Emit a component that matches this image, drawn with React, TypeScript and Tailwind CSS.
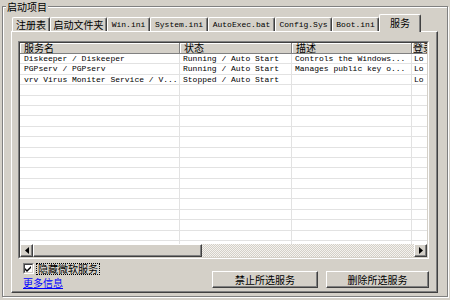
import React from 'react';

const cjk = "[font-family:'Noto_Sans_CJK_SC',sans-serif]";
const mono = "[font-family:'Liberation_Mono','Noto_Sans_CJK_SC',monospace]";

const raised =
  'border border-t-white border-l-white border-r-[#404040] border-b-[#404040] shadow-[inset_-1px_-1px_0_#808080] bg-[#d4d0c8]';

const tabs = [
  { label: '注册表', w: 'w-[38px]', ascii: false },
  { label: '启动文件夹', w: 'w-[57px]', ascii: false },
  { label: 'Win.ini', w: 'w-[43px]', ascii: true },
  { label: 'System.ini', w: 'w-[58px]', ascii: true },
  { label: 'AutoExec.bat', w: 'w-[67px]', ascii: true },
  { label: 'Config.Sys', w: 'w-[57px]', ascii: true },
  { label: 'Boot.ini', w: 'w-[47px]', ascii: true },
];

// last column is only partly visible, as in the list view
const columns = [
  { title: '服务名', w: 'w-[160px]', clip: '' },
  { title: '状态', w: 'w-[112px]', clip: '' },
  { title: '描述', w: 'w-[120px]', clip: '' },
  { title: '登录', w: 'w-[15px]', clip: 'overflow-hidden' },
];

const services = [
  ['Diskeeper / Diskeeper', 'Running / Auto Start', 'Controls the Windows...', 'Lo'],
  ['PGPserv / PGPserv', 'Running / Auto Start', 'Manages public key o...', 'Lo'],
  ['vrv Virus Moniter Service / V...', 'Stopped / Auto Start', '', 'Lo'],
];

const rows = [...services, ...Array.from({ length: 16 }, () => ['', '', '', ''])];

const Arrow: React.FC<{ dir: 'left' | 'right' }> = ({ dir }) => (
  <svg width="4" height="7" viewBox="0 0 4 7">
    {dir === 'left' ? <path d="M4 0 L0 3.5 L4 7 Z" fill="#000" /> : <path d="M0 0 L4 3.5 L0 7 Z" fill="#000" />}
  </svg>
);

const ScrollButton: React.FC<{ dir: 'left' | 'right' }> = ({ dir }) => (
  <div className={`w-[13px] h-full shrink-0 flex items-center justify-center ${raised}`}>
    <Arrow dir={dir} />
  </div>
);

const ServiceTable: React.FC = () => (
  <div className="ml-[6px] mt-[9px] w-[411px] h-[218px] border border-t-[#808080] border-l-[#808080] border-r-white border-b-white">
    <div className="w-full h-full border border-t-[#404040] border-l-[#404040] border-r-[#d4d0c8] border-b-[#d4d0c8] flex flex-col bg-white">
      {/* header */}
      <div className="flex h-[11px] shrink-0">
        {columns.map((c, j) => (
          <div
            key={c.title}
            className={`${c.w} ${c.clip} ${cjk} shrink-0 h-full bg-[#d4d0c8] border-b border-b-[#808080] ${j < 3 ? 'border-r border-r-[#808080]' : ''} shadow-[inset_1px_1px_0_#fff] ${j === 3 ? 'pl-[1px]' : 'pl-[4px]'} text-[10px] leading-[10px] text-black whitespace-nowrap`}
          >
            {c.title}
          </div>
        ))}
      </div>
      {/* rows */}
      <div className="flex-1 overflow-hidden">
        {rows.map((r, i) => (
          <div key={i} className="flex h-[10.4px] border-b border-[#e2e2e2]">
            {r.map((cell, j) => (
              <div
                key={j}
                className={`${columns[j].w} ${mono} shrink-0 ${j < 3 ? 'border-r border-[#e2e2e2]' : ''} ${j === 0 ? 'pl-[4px]' : j === 3 ? 'pl-[2px]' : 'pl-[3px]'} text-[8px] leading-[10px] text-black overflow-hidden whitespace-nowrap`}
              >
                {cell}
              </div>
            ))}
          </div>
        ))}
      </div>
      {/* horizontal scrollbar */}
      <div className="flex h-[13px] shrink-0">
        <ScrollButton dir="left" />
        <div className={`w-[169px] h-full shrink-0 ${raised}`} />
        <div className="flex-1 h-full bg-[repeating-conic-gradient(#d4d0c8_0_25%,#f4f2ee_0_50%)] bg-[length:2px_2px]" />
        <ScrollButton dir="right" />
      </div>
    </div>
  </div>
);

const Button: React.FC<{ label: string; w: string }> = ({ label, w }) => (
  <div className={`${w} h-[17px] flex items-center justify-center ${raised} ${cjk} text-[10px] leading-[10px] text-black`}>
    {label}
  </div>
);

export default function App() {
  return (
    <div className="w-[450px] h-[300px] bg-[#d4d0c8] px-[2px] overflow-hidden">
      <fieldset className="h-[297px] w-[446px] border border-[#808080] shadow-[inset_1px_1px_0_#fff,1px_1px_0_#fff]">
        <legend className={`ml-[3px] px-[1px] bg-[#d4d0c8] ${cjk} text-[10px] leading-[13px] text-black`}>启动项目</legend>

        {/* tab strip */}
        <div className="mt-[1px] h-[17px] pl-[9px] flex items-end">
          {tabs.map((t) => (
            <div
              key={t.label}
              className={`${t.w} h-[14px] shrink-0 flex items-center justify-center rounded-t-[2px] border-l border-t border-r border-l-white border-t-white border-r-[#404040] shadow-[inset_-1px_0_0_#808080] ${t.ascii ? mono + ' text-[8px]' : cjk + ' text-[10px]'} leading-[10px] text-black whitespace-nowrap`}
            >
              {t.label}
            </div>
          ))}
          <div
            className={`w-[42px] h-[18px] -mb-px relative z-10 shrink-0 flex items-start pt-[3px] justify-center rounded-t-[2px] bg-[#d4d0c8] border-l border-t border-r border-l-white border-t-white border-r-[#404040] shadow-[inset_-1px_0_0_#808080] ${cjk} text-[10px] leading-[10px] text-black`}
          >
            服务
          </div>
        </div>

        {/* tab panel */}
        <div className="ml-[8px] w-[427px] h-[262px] border border-t-white border-l-white border-r-[#404040] border-b-[#404040] shadow-[inset_-1px_-1px_0_#808080]">
          <ServiceTable />

          <div className="flex pl-[11px] pr-[8px] mt-[4px]">
            <div className="flex flex-col">
              <div className="flex items-center h-[11px]">
                <div className="w-[11px] h-[11px] border border-t-[#808080] border-l-[#808080] border-r-white border-b-white">
                  <div className="w-full h-full bg-white border border-t-[#404040] border-l-[#404040] border-r-[#d4d0c8] border-b-[#d4d0c8] flex items-center justify-center">
                    <svg width="7" height="7" viewBox="0 0 7 7">
                      <path d="M0 3 L2 5 L6 1 L6 3 L2 7 L0 5 Z" fill="#000" />
                    </svg>
                  </div>
                </div>
                <div className={`ml-[2px] px-[1px] border border-dotted border-black ${cjk} text-[10px] leading-[10px] text-black`}>
                  隐藏微软服务
                </div>
              </div>
              <div className={`mt-[3px] ${cjk} text-[10px] leading-[11px] text-[#0000ff] underline`}>更多信息</div>
            </div>
            <div className="ml-auto mt-[8px] flex gap-[8px]">
              <Button label="禁止所选服务" w="w-[106px]" />
              <Button label="删除所选服务" w="w-[103px]" />
            </div>
          </div>
        </div>
      </fieldset>
    </div>
  );
}
